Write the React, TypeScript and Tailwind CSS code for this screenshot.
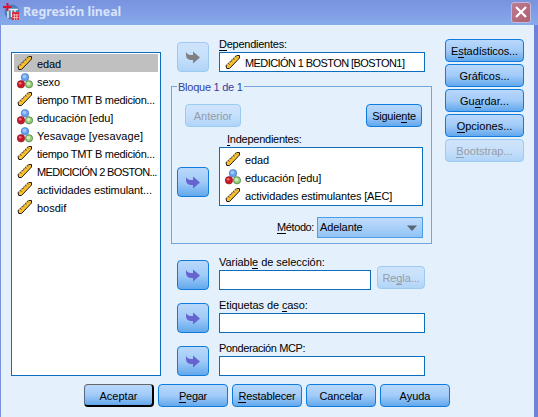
import React from "react";

type Kind = "scale" | "nominal";

function Ruler() {
  return (
    <svg width="16" height="16" viewBox="0 0 16 16" className="shrink-0">
      <path d="M1 11.800 11.500 1.500H14.500V4L4.500 14.500H1.800Z" fill="#fdc22c" />
      <path d="M1 11.800 11.500 1.500" stroke="#4d4638" strokeWidth="1.100" strokeDasharray="1.600 .9" />
      <path d="M11.500 1.500H14.500V4L4.500 14.500H1.800L1 11.800" fill="none" stroke="#1e1c1a" strokeWidth="1" />
      <path d="M3.800 9.700l1 1M6.200 7.300l1 1M8.600 4.900l1 1M11 2.700l1 1" stroke="#80601c" strokeWidth=".9" />
    </svg>
  );
}

function Balls() {
  return (
    <svg width="16" height="16" viewBox="0 0 16 16" className="shrink-0">
      <circle cx="8" cy="4.300" r="3.800" fill="#659eed" stroke="#4b7ec5" strokeWidth=".7" />
      <circle cx="7.500" cy="3.600" r="2" fill="#a0c6f8" />
      <circle cx="4" cy="11.300" r="3.700" fill="#c9182b" stroke="#8e1a24" strokeWidth=".7" />
      <circle cx="3.200" cy="10.200" r="1.300" fill="#ef7580" />
      <circle cx="12" cy="11.300" r="3.600" fill="#98cc7b" stroke="#4d7f42" strokeWidth=".8" />
      <circle cx="11.400" cy="10.600" r="1.800" fill="#cdeebb" />
    </svg>
  );
}

function Item({ kind, text, selected, spacing = "" }: { kind: Kind; text: string; selected?: boolean; spacing?: string }) {
  return (
    <div className={"flex h-[18px] items-center gap-1 pl-[3px] whitespace-nowrap " + (selected ? "bg-[#c0c0c0]" : "")}>
      {kind === "scale" ? <Ruler /> : <Balls />}
      <span className={"pt-[2px] leading-[14px] " + spacing}>{text}</span>
    </div>
  );
}

/* Label with its keyboard mnemonic underlined */
function Mn({ text, at }: { text: string; at?: number }) {
  if (at === undefined) return <>{text}</>;
  return (
    <>
      {text.slice(0, at)}
      <span className="border-b border-current">{text[at]}</span>
      {text.slice(at + 1)}
    </>
  );
}

const face = "border-[#0f7bdc] bg-linear-to-b from-[#b9d8fb] via-[#a1cbf8] to-[#62a8ec] ";
const faceOff = "border-[#9bcaf3] bg-linear-to-b from-[#cfe4fb] via-[#c6e0fb] to-[#b0d4f7] ";

function Button({ text, at, off, size, primary }: { text: string; at?: number; off?: boolean; size: string; primary?: boolean }) {
  return (
    <button
      className={
        "flex h-[23px] shrink-0 items-center justify-center rounded-[4px] border pt-px leading-[12px] whitespace-nowrap " +
        size + " " +
        (off ? faceOff + "text-[#979ca5]" : face) +
        (primary ? " border-t-[#666] border-l-[#5a6a80] border-r-2 border-b-2 border-r-black border-b-black" : "")
      }
    >
      <span><Mn text={text} at={at} /></span>
    </button>
  );
}

function Arrow({ off }: { off?: boolean }) {
  return (
    <button className={"flex h-[30px] w-8 shrink-0 items-center justify-center rounded-[4px] border " + (off ? faceOff : face)}>
      <svg width="16" height="14" viewBox="0 0 16 14">
        <path d="M1 2v3c0 3 2 5 6 5h1v3.500L15 7.500 8 1.500V5H6C3.500 5 2 4 1 2Z" fill={off ? "#808080" : "#6763cf"} />
      </svg>
    </button>
  );
}

function Field({ label, at, size, spacing, children }: { label: string; at?: number; size: string; spacing: string; children?: React.ReactNode }) {
  return (
    <div className="flex flex-col">
      <div className={"h-[15px] leading-[14px] whitespace-nowrap " + spacing}><Mn text={label} at={at} /></div>
      <div className={"h-5 border border-[#0c6cbe] bg-white pl-[2px] " + size}>{children}</div>
    </div>
  );
}

export default function App() {
  return (
    <div className="flex h-[417px] w-[538px] flex-col overflow-hidden bg-[#e4f0fc] font-['Liberation_Sans',Arial,sans-serif] text-[11px] text-black">
      <header className="flex h-[25px] shrink-0 items-center bg-linear-to-b from-[#7993df] via-[#7f9de6] to-[#86aceb] pr-[7px] pl-[3px]">
        <svg width="17" height="17" viewBox="0 0 17 17" className="-mt-[2px]">
          <circle cx="9" cy="9" r="7.500" fill="#4d80b8" />
          <path d="M4 6.500h11M5 7v8M8.500 7v7M12 7v3" stroke="#e8edf4" strokeWidth="1.500" />
          <path d="M4.500 0v8M0 4h8.500" stroke="#e00f30" strokeWidth="2" />
          <path d="M9 9h7v8H9z" fill="#d82e3d" />
          <path d="M9.500 12h6M9.500 14.500h6M11.500 11v6M13.800 11v6" stroke="#f7c8ca" strokeWidth=".8" />
        </svg>
        <span className="ml-[3px] font-['Noto_Sans',sans-serif] text-[12.3px] leading-none font-bold text-[#d9e4fa]">Regresión lineal</span>
        <button className="-mt-px ml-auto flex h-[21px] w-[20px] items-center justify-center rounded-[3px] border border-[#c3b9dc] bg-linear-to-br from-[#bd7a91] to-[#ad6070]">
          <svg width="12" height="12" viewBox="0 0 12 12"><path d="M1 1l10 10M11 1L1 11" stroke="#fff" strokeWidth="2.200" /></svg>
        </button>
      </header>
      <main className="flex h-[392px] flex-col border-r-4 border-l border-r-[#6d83d8] border-l-[#7d92df] pl-[10px]">
        <div className="flex h-[351px] items-start">
          <div className="mt-[27px] h-[324px] w-[150px] shrink-0 border border-[#0c6cbe] bg-white px-[2px] pt-px whitespace-nowrap">
            <Item kind="scale" text="edad" selected spacing="tracking-[-0.1px]" />
            <Item kind="nominal" text="sexo" />
            <Item kind="scale" text="tiempo TMT B medicion..." spacing="tracking-[-0.3px]" />
            <Item kind="nominal" text="educación [edu]" spacing="tracking-[-0.1px]" />
            <Item kind="nominal" text="Yesavage [yesavage]" spacing="tracking-[0.1px]" />
            <Item kind="scale" text="tiempo TMT B medición..." spacing="tracking-[-0.3px]" />
            <Item kind="scale" text="MEDICICIÓN 2 BOSTON..." spacing="tracking-[-0.63px]" />
            <Item kind="scale" text="actividades estimulant..." spacing="tracking-[-0.1px]" />
            <Item kind="scale" text="bosdif" />
          </div>
          <div className="ml-[10px] flex w-[261px] shrink-0 flex-col">
            <div className="mt-3 flex items-end gap-[10px] pl-[6px]">
              <div className="pt-[5px]"><Arrow off /></div>
              <Field label="Dependientes:" at={0} size="w-[206px]" spacing="tracking-[-0.25px]">
                <Item kind="scale" text="MEDICIÓN 1 BOSTON [BOSTON1]" spacing="tracking-[-0.58px]" />
              </Field>
            </div>
            <fieldset className="mt-[8px] flex h-[164px] flex-col border border-[#74a5d8] px-[5px]">
              <legend className="h-[13px] px-px leading-[14px] tracking-[-0.25px] text-[#35419c]">Bloque 1 de 1</legend>
              <div className="mt-[11px] flex justify-between pr-1 pl-2">
                <Button text="Anterior" off size="w-14" />
                <Button text="Siguiente" at={6} size="w-14 tracking-[-0.25px]" />
              </div>
              <div className="mt-[5px] flex gap-[10px]">
                <div className="pt-[35px]"><Arrow /></div>
                <div>
                  <div className="h-[15px] pl-2 leading-[15px] tracking-[-0.25px]"><Mn text="Independientes:" at={0} /></div>
                  <div className="h-[59px] w-[204px] border border-[#0c6cbe] bg-white pt-[2px] pl-[2px] whitespace-nowrap">
                    <Item kind="scale" text="edad" spacing="tracking-[-0.1px]" />
                    <Item kind="nominal" text="educación [edu]" spacing="tracking-[-0.1px]" />
                    <Item kind="scale" text="actividades estimulantes [AEC]" spacing="tracking-[-0.15px]" />
                  </div>
                </div>
              </div>
              <div className="mt-[11px] flex items-center justify-end gap-[3px] pr-[3px]">
                <span className="tracking-[-0.4px]"><Mn text="Método:" at={0} /></span>
                <div className="flex h-[21px] w-[106px] items-center justify-between border border-[#4b9fe8] bg-linear-to-b from-[#c0dcfb] to-[#91c3f6] pr-[5px] pl-[2px]">
                  <span className="tracking-[-0.1px]">Adelante</span>
                  <svg width="10" height="6" viewBox="0 0 10 6"><path d="M0 .5h10L5 6Z" fill="#586773" /></svg>
                </div>
              </div>
            </fieldset>
            <div className="mt-[11px] flex items-end pl-[6px]">
              <Arrow />
              <div className="ml-[10px]"><Field label="Variable de selección:" at={7} size="w-[152px]" spacing="tracking-[-0.05px]" /></div>
              <div className="mb-px ml-[6px]"><Button text="Regla..." at={2} off size="w-12 tracking-[-0.1px]" /></div>
            </div>
            <div className="mt-[8px] flex items-end gap-[10px] pl-[6px]">
              <Arrow />
              <Field label="Etiquetas de caso:" at={13} size="w-[206px]" spacing="tracking-[-0.1px]" />
            </div>
            <div className="mt-[8px] flex items-end gap-[10px] pl-[6px]">
              <Arrow />
              <Field label="Ponderación MCP:" size="w-[206px]" spacing="tracking-[-0.38px]" />
            </div>
          </div>
          <div className="mt-[14px] ml-[13px] flex flex-col gap-[2px]">
            <Button text="Estadísticos..." at={1} size="w-[79px] tracking-[-0.1px]" />
            <Button text="Gráficos..." size="w-[79px]" />
            <Button text="Guardar..." at={2} size="w-[79px]" />
            <Button text="Opciones..." at={0} size="w-[79px]" />
            <Button text="Bootstrap..." at={0} off size="w-[79px]" />
          </div>
        </div>
        <div className="mt-2 ml-[73px] flex gap-1">
          <Button text="Aceptar" primary size="w-[70px]" />
          <Button text="Pegar" at={0} size="w-[70px] tracking-[-0.3px]" />
          <Button text="Restablecer" at={0} size="w-[70px] tracking-[-0.15px]" />
          <Button text="Cancelar" size="w-[70px] tracking-[-0.1px]" />
          <Button text="Ayuda" size="w-[70px]" />
        </div>
      </main>
    </div>
  );
}
